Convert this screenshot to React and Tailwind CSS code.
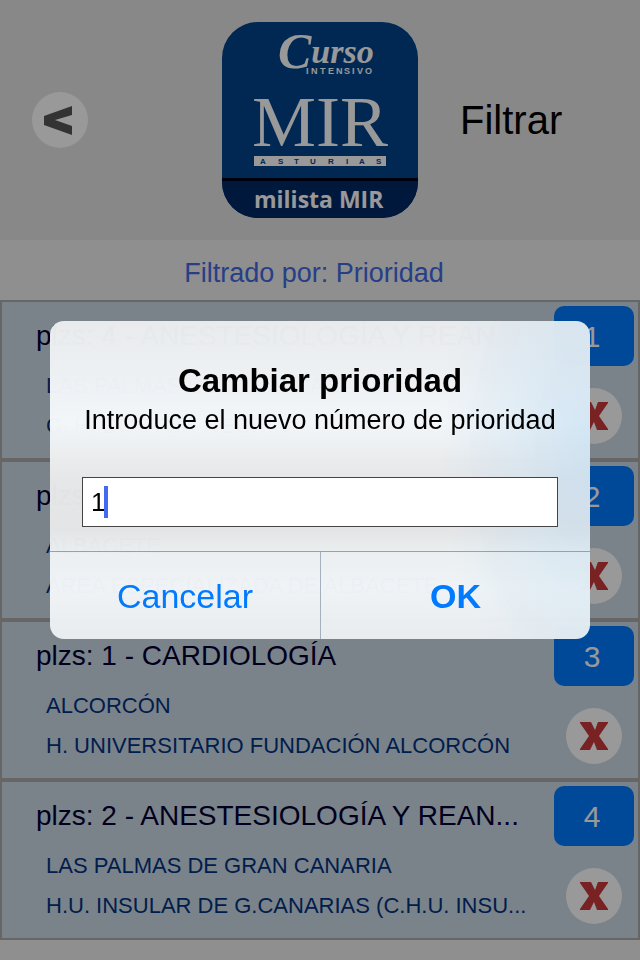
import { useState } from 'react';

const PLAZAS = [
  {
    priority: 1,
    title: 'plzs: 4 - ANESTESIOLOGÍA Y REAN...',
    city: 'LAS PALMAS DE GRAN CANARIA',
    hospital: 'C. H. DOCTOR NEGRÍN',
  },
  {
    priority: 2,
    title: 'plzs: 1',
    city: 'ALBACETE',
    hospital: 'ÁREA ESPECIALIZADA DE ALBACETE',
  },
  {
    priority: 3,
    title: 'plzs: 1 - CARDIOLOGÍA',
    city: 'ALCORCÓN',
    hospital: 'H. UNIVERSITARIO FUNDACIÓN ALCORCÓN',
  },
  {
    priority: 4,
    title: 'plzs: 2 - ANESTESIOLOGÍA Y REAN...',
    city: 'LAS PALMAS DE GRAN CANARIA',
    hospital: 'H.U. INSULAR DE G.CANARIAS (C.H.U. INSU...',
  },
];

function Logo() {
  return (
    <svg viewBox="0 0 196 196" className="size-[196px]" role="img" aria-label="milista MIR">
      <clipPath id="logo-shape">
        <rect width="196" height="196" rx="36" />
      </clipPath>
      <g clipPath="url(#logo-shape)">
        <rect width="196" height="196" fill="#00438a" />
        <rect y="156" width="196" height="40" fill="#002964" />
        <rect y="156" width="196" height="3" fill="#000018" />
      </g>
      <g fill="#fff">
        <text x="56" y="46" className="font-['Liberation_Serif',serif] text-[34px] font-bold italic">
          <tspan className="text-[50px]">C</tspan>
          <tspan y="41">urso</tspan>
        </text>
        <text
          x="84 89 98 106 114 122 130 135 143"
          y="52"
          className="font-['Liberation_Sans',sans-serif] text-[9px] font-bold"
        >
          INTENSIVO
        </text>
        <text x="30" y="124" className="font-['Liberation_Serif',serif] text-[72px]">
          MIR
        </text>
        <rect x="32" y="134" width="132" height="10" />
        <text x="32" y="186" className="font-['Open_Sans',sans-serif] text-[23px] font-bold">
          milista MIR
        </text>
      </g>
      <text
        x="38 56 72 88 106 124 137 154"
        y="142"
        fill="#00438a"
        className="font-['Liberation_Sans',sans-serif] text-[8px] font-bold"
      >
        ASTURIAS
      </text>
    </svg>
  );
}

function Header() {
  return (
    <header className="grid h-60 grid-cols-[1fr_auto_1fr] items-center bg-[#e3e3e3]">
      <button type="button" aria-label="Volver" className="ml-8 size-14 rounded-full bg-white">
        <svg viewBox="0 0 56 56" className="size-14" fill="#555">
          <path d="M40 14v9L23 28l17 6v9L12 33v-9z" />
        </svg>
      </button>
      <Logo />
      <h1 className="pl-[42px] text-[40px]">Filtrar</h1>
    </header>
  );
}

function PlazaRow({ plaza }) {
  return (
    <li className="flex justify-between border-2 border-[#aaa] bg-[#cddae6] pt-1 pr-1 pb-3 pl-[34px]">
      <div className="min-w-0 pt-2.5 whitespace-nowrap">
        <h2 className="text-[28px] leading-10 text-[#000033]">{plaza.title}</h2>
        <div className="mt-2.5 pl-2.5 text-[22px] leading-10 text-[#003380]">
          <p>{plaza.city}</p>
          <p>{plaza.hospital}</p>
        </div>
      </div>
      <div className="flex shrink-0 flex-col items-center gap-[22px]">
        <button
          type="button"
          className="h-[60px] w-20 rounded-[10px] bg-[#007aff] pr-1 text-[30px] text-white"
        >
          {plaza.priority}
        </button>
        <button type="button" aria-label="Eliminar" className="size-14 rounded-full bg-white">
          <svg viewBox="0 0 56 56" className="size-14" fill="#c83a3c">
            <path d="M14 14h11l4 8 3-8h10v1l-9 13 9 13v1H31l-3-8-4 8H14v-1l9-13-9-13z" />
          </svg>
        </button>
      </div>
    </li>
  );
}

function PriorityDialog() {
  const [value, setValue] = useState('1');

  return (
    <div className="fixed inset-0 flex items-center bg-black/40 px-[50px]">
      <form
        role="dialog"
        aria-labelledby="dialog-title"
        onSubmit={(e) => e.preventDefault()}
        className="w-full overflow-hidden rounded-[14px] bg-[radial-gradient(ellipse_28%_85%_at_100%_40%,rgba(190,220,242,0.6),rgba(190,220,242,0)),linear-gradient(to_bottom,#e9ebedfb,#f3f7fafb_32%,#e6e7e8fb_50%,#e4e5e6fb_66%,#ecf0f2fb_73%,#f0f4f6fb_84%,#e9edf0fb)] text-black"
      >
        <div className="px-8 pt-10 pb-6 text-center">
          <h2 id="dialog-title" className="text-[33px] leading-10 font-bold">
            Cambiar prioridad
          </h2>
          <label htmlFor="priority" className="block text-[27px] leading-[38px] whitespace-nowrap">
            Introduce el nuevo número de prioridad
          </label>
          <div className="relative mt-[38px]">
            <input
              id="priority"
              type="text"
              value={value}
              onChange={(e) => setValue(e.target.value)}
              className="block h-[50px] w-full border border-[#444] bg-white px-2 text-[26px] caret-[#426bf2] outline-none"
            />
            <span className="absolute top-[9px] left-[22px] h-8 w-1 bg-[#426bf2]" />
          </div>
        </div>
        <div className="grid grid-cols-2 border-t border-[#93a1b0] text-[34px] text-[#007aff]">
          <button type="button" className="h-[87px] pt-0.5">
            Cancelar
          </button>
          <button type="submit" className="border-l border-[#a4b0bc] pt-0.5 font-bold">
            OK
          </button>
        </div>
      </form>
    </div>
  );
}

export default function App() {
  return (
    <div className="min-h-screen bg-[#eee] font-['Liberation_Sans',Arial,sans-serif] text-black">
      <Header />
      <main>
        <p className="h-[60px] pt-1.5 pr-3 text-center text-[27px] leading-[54px] text-[#4169e1]">
          Filtrado por: Prioridad
        </p>
        <ul>
          {PLAZAS.map((plaza) => (
            <PlazaRow key={plaza.priority} plaza={plaza} />
          ))}
        </ul>
      </main>
      <PriorityDialog />
    </div>
  );
}
